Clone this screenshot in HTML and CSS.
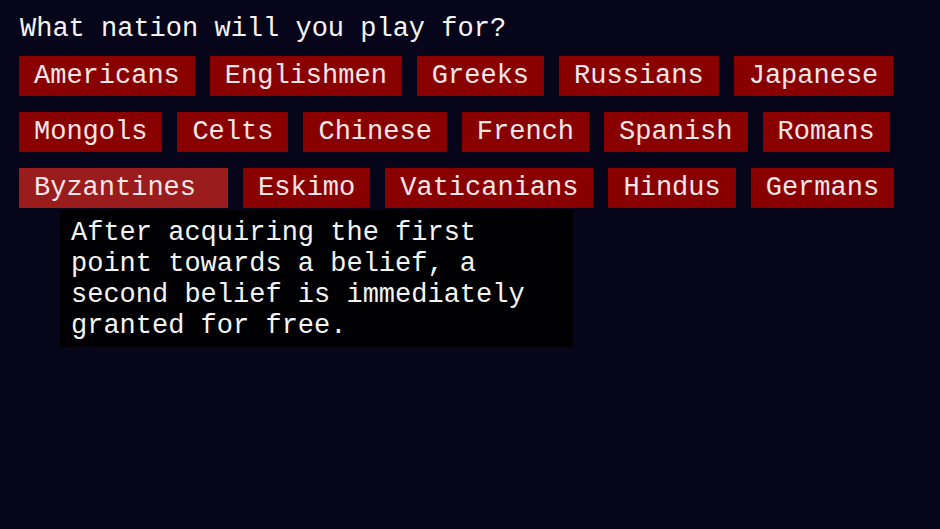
FILE: index.html
```html
<!DOCTYPE html>
<html>
<head>
<meta charset="utf-8">
<link rel="stylesheet" href="styles.css">
</head>
<body>
<main class="screen">
  <h1 class="prompt">What nation will you play for?</h1>
  <div class="nations">
    <div class="row">
      <button class="nation">Americans</button>
      <button class="nation">Englishmen</button>
      <button class="nation">Greeks</button>
      <button class="nation">Russians</button>
      <button class="nation">Japanese</button>
    </div>
    <div class="row">
      <button class="nation">Mongols</button>
      <button class="nation">Celts</button>
      <button class="nation">Chinese</button>
      <button class="nation">French</button>
      <button class="nation">Spanish</button>
      <button class="nation">Romans</button>
    </div>
    <div class="row">
      <div class="hover-wrap">
        <button class="nation nation-active">Byzantines</button>
        <div class="tooltip">After acquiring the first point towards a belief, a second belief is immediately granted for free.</div>
      </div>
      <button class="nation">Eskimo</button>
      <button class="nation">Vaticanians</button>
      <button class="nation">Hindus</button>
      <button class="nation">Germans</button>
    </div>
  </div>
</main>
</body>
</html>
```

FILE: styles.css
```css
html, body {
  margin: 0;
  padding: 0;
  background: #06051a;
  width: 940px;
  height: 529px;
  overflow: hidden;
}

.screen {
  padding: 14px 19px 0 19px;
  font-family: "Courier New", "Nimbus Mono PS", "FreeMono", Courier, "Liberation Mono", monospace;
  font-size: 27px;
  color: #f2f2f2;
}

.prompt {
  margin: 0 0 0 1px;
  font-size: 27px;
  font-weight: normal;
  line-height: 30px;
  color: #f4f4f4;
}

.nations {
  margin-top: 12px;
  display: flex;
  flex-direction: column;
  gap: 16px;
}

.row {
  display: flex;
  gap: 15px;
}

.nation {
  font-family: inherit;
  font-size: 27px;
  line-height: 40px;
  height: 40px;
  padding: 0 15px;
  margin: 0;
  border: none;
  background: #890000;
  color: #f3e6e6;
  white-space: nowrap;
  cursor: pointer;
}

.hover-wrap {
  position: relative;
  display: flex;
}

.nation-active {
  background: #9a1c1c;
  padding-right: 32px;
}

.tooltip {
  position: absolute;
  top: 42px;
  left: 41px;
  width: 470px;
  padding: 8px 32px 5px 11px;
  background: #010103;
  color: #f4f4f4;
  font-size: 27px;
  line-height: 31px;
  z-index: 2;
}
```
